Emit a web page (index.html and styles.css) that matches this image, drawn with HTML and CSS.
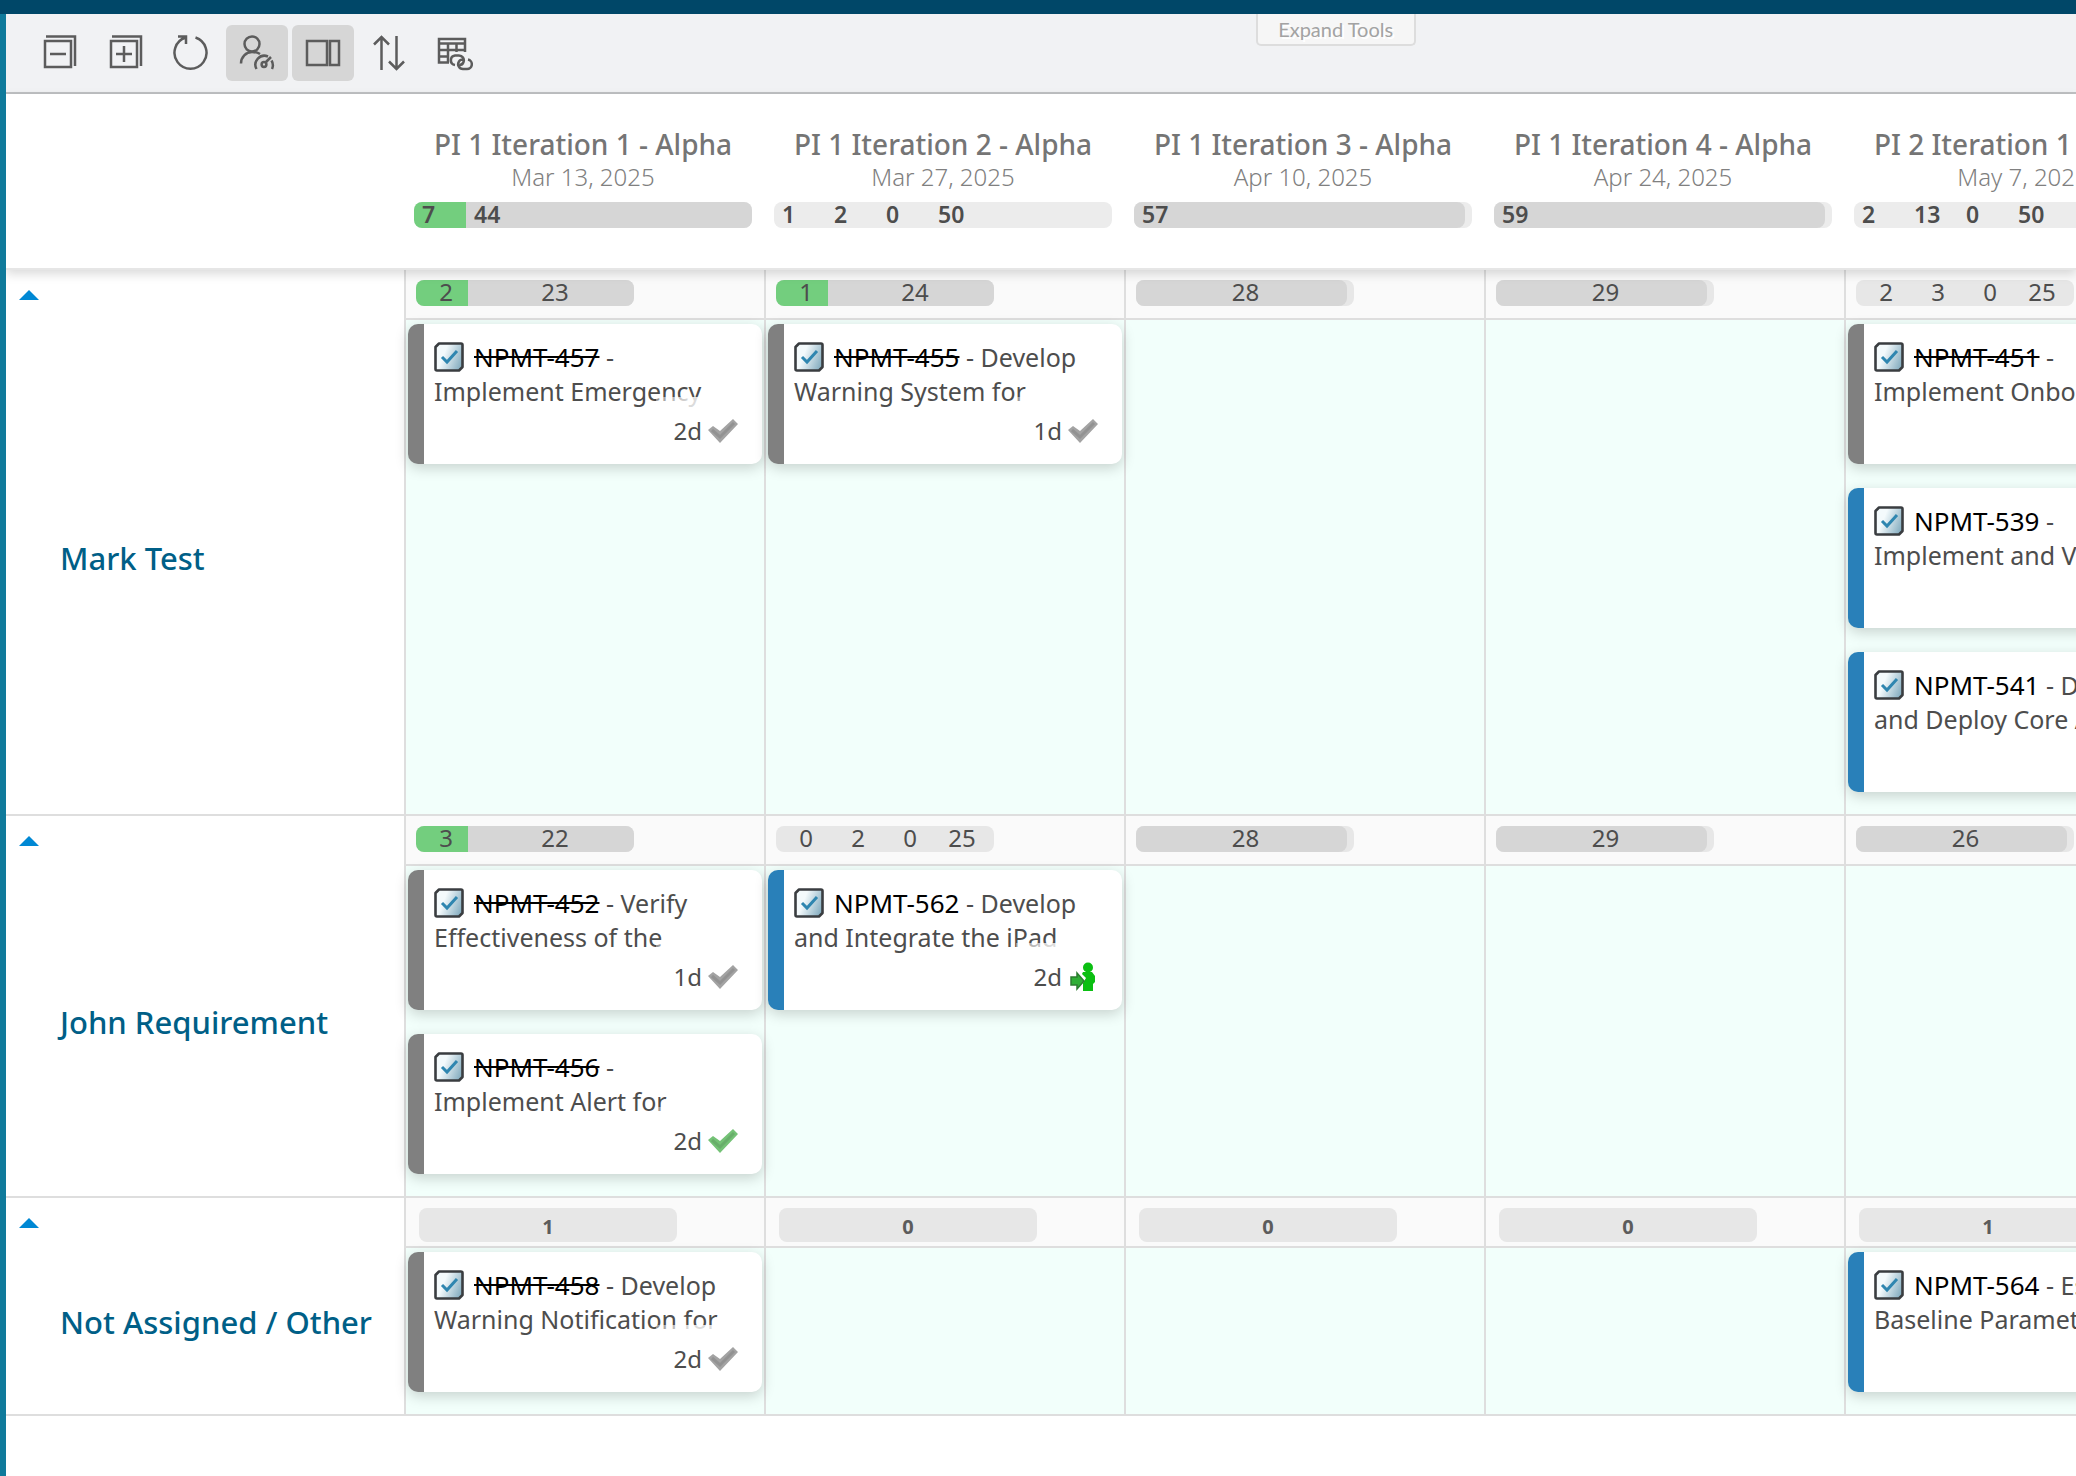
FILE: index.html
```
<!DOCTYPE html>
<html lang="en">
<head>
    <meta charset="UTF-8">
    <meta name="viewport" content="width=device-width, initial-scale=1.0">
    <title>Resource Planning Board</title>
    <link rel="stylesheet" href="styles.css">
</head>
<body>

<!-- shared icons -->
<svg class="sprite" aria-hidden="true">
    <defs>
        <linearGradient id="taskFill" x1="0" y1="0.3" x2="1" y2="0.7">
            <stop offset="0.3" stop-color="#f4fafc"/>
            <stop offset="1" stop-color="#85adc0"/>
        </linearGradient>
    </defs>
    <symbol id="i-task" viewBox="0 0 30 30">
        <path d="M5 1.500H27Q28.500 1.500 28.500 3V25L25 28.500H3Q1.500 28.500 1.500 27V5Z" fill="url(#taskFill)" stroke="#3a3d40" stroke-width="2.600" stroke-linejoin="round"/>
        <path d="M8 15l5 5 10-11" fill="none" stroke="#2f86b0" stroke-width="3"/>
    </symbol>
    <symbol id="i-check" viewBox="0 0 32 26">
        <path d="M1 12l5-4 7 5L26 1l5 5L13 25Z" fill="currentColor"/>
        <path d="M5 12l8 7L27 5" fill="none" stroke="#000" stroke-opacity="0.1" stroke-width="3"/>
    </symbol>
    <symbol id="i-person" viewBox="0 0 26 30">
        <circle cx="18" cy="5.500" r="5" fill="#0bbf12"/>
        <path d="M13 10h9l3 4v6l-2 2v7h-10v-8l3-5-4-4Z" fill="#0bbf12"/>
        <path d="M1 15h6v-4l7 8-7 8v-4H1Z" fill="#2fae35" stroke="#2b7d2f" stroke-width="1.500"/>
    </symbol>
</svg>

<header class="topbar"></header>

<div class="page">
    <div class="toolbar">
        <button class="tool" aria-label="Collapse all">
            <svg viewBox="0 0 36 36"><path d="M4 6H30V32H4Z M5 1.500H34V31 M9 19H25"/></svg>
        </button>
        <button class="tool" aria-label="Expand all">
            <svg viewBox="0 0 36 36"><path d="M4 6H30V32H4Z M5 1.500H34V31 M9 19H25 M17 11V27"/></svg>
        </button>
        <button class="tool" aria-label="Refresh">
            <svg viewBox="0 0 36 36"><path d="M22.500 2.500A16 16 0 1 1 12.500 2.500 M5 1.500H13V9"/></svg>
        </button>
        <button class="tool active" aria-label="Show capacity">
            <svg viewBox="0 0 36 36"><circle cx="13" cy="9" r="7.500"/><path d="M2 28.500C2 22 7 17 13 17Q18 17 21 19 M17.500 34A9 9 0 0 1 29 21.500 M32.500 25.500A9 9 0 0 1 33 34 M26 28L32 22"/><circle cx="25" cy="29.500" r="2.400"/></svg>
        </button>
        <button class="tool active" aria-label="Show side panel">
            <svg viewBox="0 0 36 36"><path d="M2 6H22V30H2Z M25 6H34V30H25Z"/></svg>
        </button>
        <button class="tool" aria-label="Sort">
            <svg viewBox="0 0 36 36"><path d="M10.500 35V2 M3 9.500L10.500 2L18 9.500 M25.500 1V34 M18 26.500L25.500 34L33 26.500"/></svg>
        </button>
        <button class="tool" aria-label="Linked table">
            <svg viewBox="0 0 36 36"><path d="M12 27.500H2V4H28V17 M2 8.500H28 M2 15H28 M2 21.500H12 M11 8.500V27.500 M19.500 8.500V17"/><path d="M18 30a4.800 4.800 0 0 1 0-9.500h4a4.800 4.800 0 0 1 4.500 6.500q-1 3-4 3 M31 24.500a4.800 4.800 0 0 1-1 9.500h-4a4.800 4.800 0 0 1-4-7.500q1-2 4-2"/></svg>
        </button>
        <button class="expand-tools">Expand Tools</button>
    </div>

    <main class="board">
        <div class="row board-head">
            <div></div>
            <div class="iteration">
                <h2>PI 1 Iteration 1 - Alpha</h2>
                <p>Mar 13, 2025</p>
                <div class="bar total"><span class="done">7</span><span class="load">44</span></div>
            </div>
            <div class="iteration">
                <h2>PI 1 Iteration 2 - Alpha</h2>
                <p>Mar 27, 2025</p>
                <div class="bar total"><span>1</span><span>2</span><span>0</span><span>50</span></div>
            </div>
            <div class="iteration">
                <h2>PI 1 Iteration 3 - Alpha</h2>
                <p>Apr 10, 2025</p>
                <div class="bar total"><span class="load part">57</span></div>
            </div>
            <div class="iteration">
                <h2>PI 1 Iteration 4 - Alpha</h2>
                <p>Apr 24, 2025</p>
                <div class="bar total"><span class="load part">59</span></div>
            </div>
            <div class="iteration">
                <h2>PI 2 Iteration 1 - Alpha</h2>
                <p>May 7, 2025</p>
                <div class="bar total"><span>2</span><span>13</span><span>0</span><span>50</span></div>
            </div>
        </div>

        <section class="row">
            <div class="person">
                <button class="toggle" aria-label="Collapse Mark Test"></button>
                <h3>Mark Test</h3>
            </div>
            <div class="cell">
                <div class="summary"><div class="bar"><span class="done">2</span><span class="load">23</span></div></div>
                <div class="cards">
                    <article class="card">
                        <p><svg class="task"><use href="#i-task"/></svg><a href="#" class="closed">NPMT-457</a> -<br>Implement Emergency</p>
                        <div class="meta">2d <svg class="check"><use href="#i-check"/></svg></div>
                    </article>
                </div>
            </div>
            <div class="cell">
                <div class="summary"><div class="bar"><span class="done">1</span><span class="load">24</span></div></div>
                <div class="cards">
                    <article class="card">
                        <p><svg class="task"><use href="#i-task"/></svg><a href="#" class="closed">NPMT-455</a> - Develop<br>Warning System for</p>
                        <div class="meta">1d <svg class="check"><use href="#i-check"/></svg></div>
                    </article>
                </div>
            </div>
            <div class="cell">
                <div class="summary"><div class="bar"><span class="load part">28</span></div></div>
                <div class="cards"></div>
            </div>
            <div class="cell">
                <div class="summary"><div class="bar"><span class="load part">29</span></div></div>
                <div class="cards"></div>
            </div>
            <div class="cell">
                <div class="summary"><div class="bar"><span>2</span><span>3</span><span>0</span><span>25</span></div></div>
                <div class="cards">
                    <article class="card">
                        <p><svg class="task"><use href="#i-task"/></svg><a href="#" class="closed">NPMT-451</a> -<br>Implement Onboarding</p>
                    </article>
                    <article class="card open">
                        <p><svg class="task"><use href="#i-task"/></svg><a href="#">NPMT-539</a> -<br>Implement and Validate</p>
                    </article>
                    <article class="card open">
                        <p><svg class="task"><use href="#i-task"/></svg><a href="#">NPMT-541</a> - Design<br>and Deploy Core App</p>
                    </article>
                </div>
            </div>
        </section>

        <section class="row">
            <div class="person">
                <button class="toggle" aria-label="Collapse John Requirement"></button>
                <h3>John Requirement</h3>
            </div>
            <div class="cell">
                <div class="summary"><div class="bar"><span class="done">3</span><span class="load">22</span></div></div>
                <div class="cards">
                    <article class="card">
                        <p><svg class="task"><use href="#i-task"/></svg><a href="#" class="closed">NPMT-452</a> - Verify<br>Effectiveness of the</p>
                        <div class="meta">1d <svg class="check"><use href="#i-check"/></svg></div>
                    </article>
                    <article class="card">
                        <p><svg class="task"><use href="#i-task"/></svg><a href="#" class="closed">NPMT-456</a> -<br>Implement Alert for</p>
                        <div class="meta">2d <svg class="check green"><use href="#i-check"/></svg></div>
                    </article>
                </div>
            </div>
            <div class="cell">
                <div class="summary"><div class="bar"><span>0</span><span>2</span><span>0</span><span>25</span></div></div>
                <div class="cards">
                    <article class="card open">
                        <p><svg class="task"><use href="#i-task"/></svg><a href="#">NPMT-562</a> - Develop<br>and Integrate the iPad</p>
                        <div class="meta">2d <svg class="in-progress"><use href="#i-person"/></svg></div>
                    </article>
                </div>
            </div>
            <div class="cell">
                <div class="summary"><div class="bar"><span class="load part">28</span></div></div>
                <div class="cards"></div>
            </div>
            <div class="cell">
                <div class="summary"><div class="bar"><span class="load part">29</span></div></div>
                <div class="cards"></div>
            </div>
            <div class="cell">
                <div class="summary"><div class="bar"><span class="load part">26</span></div></div>
                <div class="cards"></div>
            </div>
        </section>

        <section class="row">
            <div class="person">
                <button class="toggle" aria-label="Collapse Not Assigned / Other"></button>
                <h3>Not Assigned / Other</h3>
            </div>
            <div class="cell">
                <div class="summary"><div class="count">1</div></div>
                <div class="cards">
                    <article class="card">
                        <p><svg class="task"><use href="#i-task"/></svg><a href="#" class="closed">NPMT-458</a> - Develop<br>Warning Notification for</p>
                        <div class="meta">2d <svg class="check"><use href="#i-check"/></svg></div>
                    </article>
                </div>
            </div>
            <div class="cell">
                <div class="summary"><div class="count">0</div></div>
                <div class="cards"></div>
            </div>
            <div class="cell">
                <div class="summary"><div class="count">0</div></div>
                <div class="cards"></div>
            </div>
            <div class="cell">
                <div class="summary"><div class="count">0</div></div>
                <div class="cards"></div>
            </div>
            <div class="cell">
                <div class="summary"><div class="count">1</div></div>
                <div class="cards">
                    <article class="card open">
                        <p><svg class="task"><use href="#i-task"/></svg><a href="#">NPMT-564</a> - Establish<br>Baseline Parameters</p>
                    </article>
                </div>
            </div>
        </section>
    </main>
</div>

</body>
</html>
```
FILE: styles.css
```
* {
    box-sizing: border-box;
}
body {
    margin: 0;
    min-height: 100vh;
    display: flex;
    flex-direction: column;
    background-color: #ffffff;
    color: #4d4d4d;
    font-family: "Noto Sans", sans-serif;
    font-size: 24px;
}
h2, h3, p {
    margin: 0;
}
button {
    padding: 0;
    border: none;
    background: none;
    font: inherit;
    cursor: pointer;
}
.sprite {
    position: absolute;
    width: 0;
    height: 0;
}
.topbar {
    height: 14px;
    background-color: #004768;
}
.page {
    flex: 1;
    border-left: 6px solid #0f7a9b;
    overflow: hidden;
}

/* toolbar */
.toolbar {
    display: flex;
    align-items: center;
    gap: 4px;
    height: 80px;
    padding-left: 22px;
    background-color: #f1f2f4;
    border-bottom: 2px solid #bfc1c3;
}
.tool {
    display: flex;
    align-items: center;
    justify-content: center;
    width: 62px;
    height: 56px;
    border-radius: 6px;
}
.tool.active {
    background-color: #d6d6d6;
}
.tool svg {
    width: 36px;
    height: 36px;
    fill: none;
    stroke: #5c5c5c;
    stroke-width: 2.5;
}
.expand-tools {
    align-self: flex-start;
    width: 160px;
    height: 32px;
    margin-left: auto;
    margin-right: calc(32% + 5px);
    border: 2px solid #dddddd;
    border-top: none;
    border-radius: 0 0 5px 5px;
    background-color: #f6f6f6;
    color: #a3a3a3;
    font-family: Lato, sans-serif;
    font-size: 20px;
    line-height: 30px;
    text-shadow: 2px 2px 0 #ffffff;
}

/* board */
.row {
    display: grid;
    grid-template-columns: 398px repeat(5, 360px);
    border-bottom: 2px solid #dedede;
}
.board-head {
    position: relative;
    height: 176px;
    padding-top: 30px;
    border-bottom-color: #e6e6e6;
    background-color: #ffffff;
    box-shadow: 0 4px 10px rgba(0, 0, 0, 0.15);
}
.iteration {
    padding: 0 12px 0 10px;
    text-align: center;
    white-space: nowrap;
}
.iteration h2 {
    color: #757575;
    font-size: 28px;
    font-weight: 500;
    line-height: 40px;
}
.iteration p {
    color: #808080;
    font-weight: 300;
    line-height: 26px;
}
.bar {
    display: flex;
    width: 218px;
    height: 26px;
    border-radius: 8px;
    background-color: #e7e7e7;
    font-size: 24px;
    line-height: 24px;
    text-align: center;
}
.bar span {
    width: 52px;
    padding-left: 8px;
}
.bar .done {
    border-radius: 8px 0 0 8px;
    background-color: #73ce7e;
}
.bar .load {
    flex: 1;
    border-radius: 0 8px 8px 0;
    background-color: #d6d6d6;
}
.bar .part {
    margin-right: 7px;
    border-radius: 8px;
}
.bar.total {
    width: 100%;
    margin-top: 12px;
    background-color: #ececec;
    font-size: 23px;
    font-weight: 600;
    text-align: left;
}

/* people rows */
.person {
    display: flex;
    flex-direction: column;
    padding: 20px 0 0 13px;
}
.toggle {
    width: 20px;
    height: 10px;
    background-color: #0088d4;
    clip-path: polygon(50% 0, 100% 100%, 0 100%);
}
.person h3 {
    margin: auto 0;
    padding: 2px 0 0 41px;
    color: #005f87;
    font-size: 31px;
    font-weight: 500;
    white-space: nowrap;
}
.cell {
    display: flex;
    flex-direction: column;
    border-left: 2px solid #dedede;
}
.summary {
    height: 50px;
    padding: 10px;
    border-bottom: 2px solid #dedede;
    background-color: #fafafa;
}
.count {
    width: 258px;
    height: 34px;
    margin-left: 3px;
    border-radius: 8px;
    background-color: #e7e7e7;
    color: #5c5c5c;
    font-size: 20px;
    font-weight: 700;
    line-height: 38px;
    text-align: center;
}
.cards {
    flex: 1;
    display: flex;
    flex-direction: column;
    gap: 24px;
    padding: 4px 2px 22px;
    background-color: #f2fffb;
}
.card {
    position: relative;
    height: 140px;
    padding: 16px 10px;
    border-left: 16px solid #808080;
    border-radius: 10px;
    background-color: #ffffff;
    box-shadow: 0 4px 14px rgba(0, 0, 0, 0.18);
    font-size: 25px;
    line-height: 34px;
    white-space: nowrap;
}
.card.open {
    border-left-color: #2980b9;
}
.card a {
    color: #000000;
    font-size: 26px;
    line-height: 32px;
    text-decoration: none;
}
.card a.closed {
    text-decoration: line-through;
}
.task {
    width: 30px;
    height: 30px;
    margin-right: 10px;
    vertical-align: -5px;
}
/* duration + status, fades the end of the title under it */
.meta {
    position: absolute;
    right: 21px;
    bottom: 15px;
    display: flex;
    align-items: center;
    gap: 5px;
    height: 52px;
    padding: 16px 2px 0 18px;
    background: linear-gradient(to right, rgba(255, 255, 255, 0.4), rgba(255, 255, 255, 0.8) 40%);
    font-size: 24px;
}
.check {
    width: 32px;
    height: 26px;
    color: #a3a3a3;
}
.check.green {
    color: #74c276;
}
.in-progress {
    width: 32px;
    height: 30px;
}
```
